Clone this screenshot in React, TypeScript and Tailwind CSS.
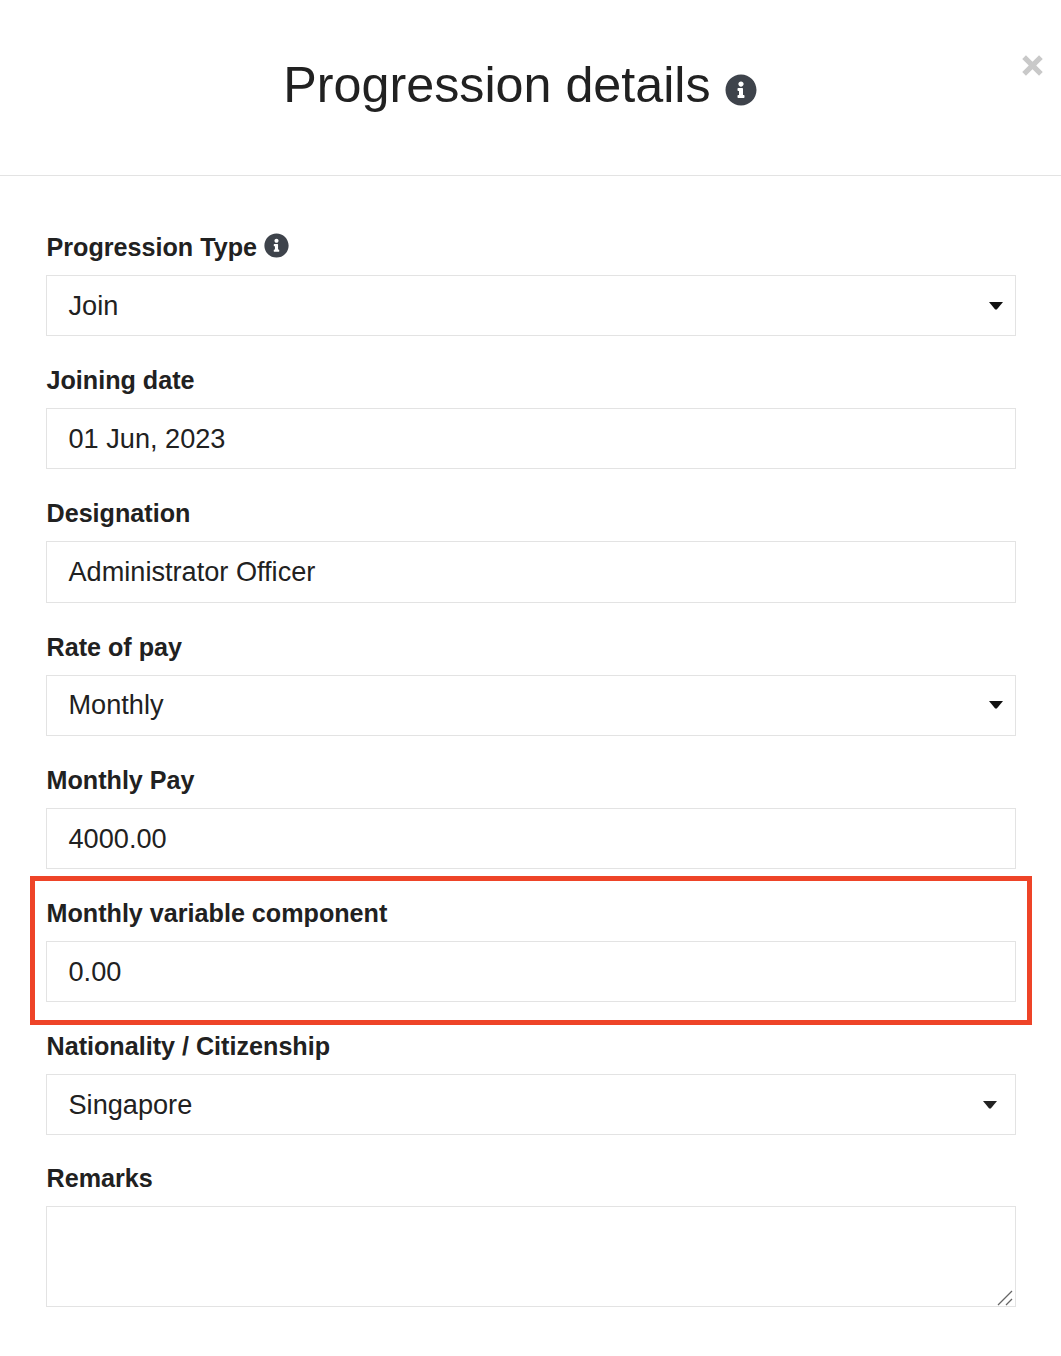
const font = "font-['Liberation_Sans',Arial,sans-serif]"

function InfoIcon({ className }: { className: string }) {
  return (
    <svg viewBox="0 0 512 512" className={className} aria-hidden="true">
      <path
        fill="#3e434b"
        d="M256 8C119 8 8 119 8 256s111 248 248 248 248-111 248-248S393 8 256 8zm0 110c23.200 0 42 18.800 42 42s-18.800 42-42 42-42-18.800-42-42 18.800-42 42-42zm56 254c0 6.600-5.400 12-12 12h-88c-6.600 0-12-5.400-12-12v-24c0-6.600 5.400-12 12-12h12v-64h-12c-6.600 0-12-5.400-12-12v-24c0-6.600 5.400-12 12-12h64c6.600 0 12 5.400 12 12v100h12c6.600 0 12 5.400 12 12v24z"
      />
    </svg>
  )
}

function Caret({ wide }: { wide?: boolean }) {
  return (
    <svg viewBox="0 0 14 8" className={wide ? 'mr-[18px] mb-[1px] h-[8px] w-[14px]' : 'mr-[12px] mb-[1px] h-[8px] w-[14px]'} aria-hidden="true">
      <path fill={wide ? '#222222' : '#111111'} d="M0 0h14L7.800 7.500h-1.600z" />
    </svg>
  )
}

function Field({ label, value, info, select, wide }: { label: string; value: string; info?: boolean; select?: boolean; wide?: boolean }) {
  return (
    <div>
      <label className="flex h-[72px] items-start gap-[6.500px] pt-[28px] pl-[0.500px] text-[25.150px] leading-[33px] font-bold text-[#212121]">
        {label}
        {info && <InfoIcon className="mt-[2px] h-[25px] w-[25px]" />}
      </label>
      <div className="flex h-[61.200px] items-center justify-between border border-[#e3e3e3] bg-white pt-[1.400px] pl-[21.500px] text-[27.150px] text-[#212121]">
        <span>{value}</span>
        {select && <Caret wide={wide} />}
      </div>
    </div>
  )
}

export default function App() {
  return (
    <div className={`relative h-[1356px] w-[1061px] overflow-hidden bg-white ${font}`}>
      {/* Header */}
      <header className="relative flex h-[176px] items-start justify-center border-b border-[#e3e3e3] pt-[55px] pr-[21px]">
        <h1 className="flex items-center gap-[14px] text-[50.250px] leading-[60px] font-normal text-[#212121]">
          Progression details
          <InfoIcon className="mt-[9px] h-[32px] w-[32px]" />
        </h1>
        <svg viewBox="0 0 20 20" className="absolute top-[55px] right-[18px] h-[21px] w-[21px]" aria-hidden="true">
          <path stroke="#c9c9c9" strokeWidth="5" d="M2 2l16 16M18 2L2 18" />
        </svg>
      </header>

      <main className="pt-[27px] pr-[45px] pl-[46px]">
        <Field label="Progression Type" value="Join" info select />
        <Field label="Joining date" value="01 Jun, 2023" />
        <Field label="Designation" value="Administrator Officer" />
        <Field label="Rate of pay" value="Monthly" select />
        <Field label="Monthly Pay" value="4000.00" />
        <Field label="Monthly variable component" value="0.00" />
        <Field label="Nationality / Citizenship" value="Singapore" select wide />
        <div>
          <label className="flex h-[71px] items-start pt-[27px] pl-[0.500px] text-[25.150px] leading-[33px] font-bold text-[#212121]">Remarks</label>
          <div className="relative">
            <textarea readOnly className="block h-[101px] w-full resize-none border border-[#e3e3e3] bg-white" />
            {/* resize grip */}
            <svg viewBox="0 0 18 16" className="absolute right-[1px] bottom-[1px] h-[16px] w-[18px]" aria-hidden="true">
              <path stroke="#666666" strokeWidth="1.300" d="M1 15L15 1M9 15l6-6" />
            </svg>
          </div>
        </div>
      </main>

      {/* Red highlight drawn over the form */}
      <div className="absolute top-[876px] left-[30px] h-[149px] w-[1002px] border-[5px] border-[#ee4428]" />
    </div>
  )
}
